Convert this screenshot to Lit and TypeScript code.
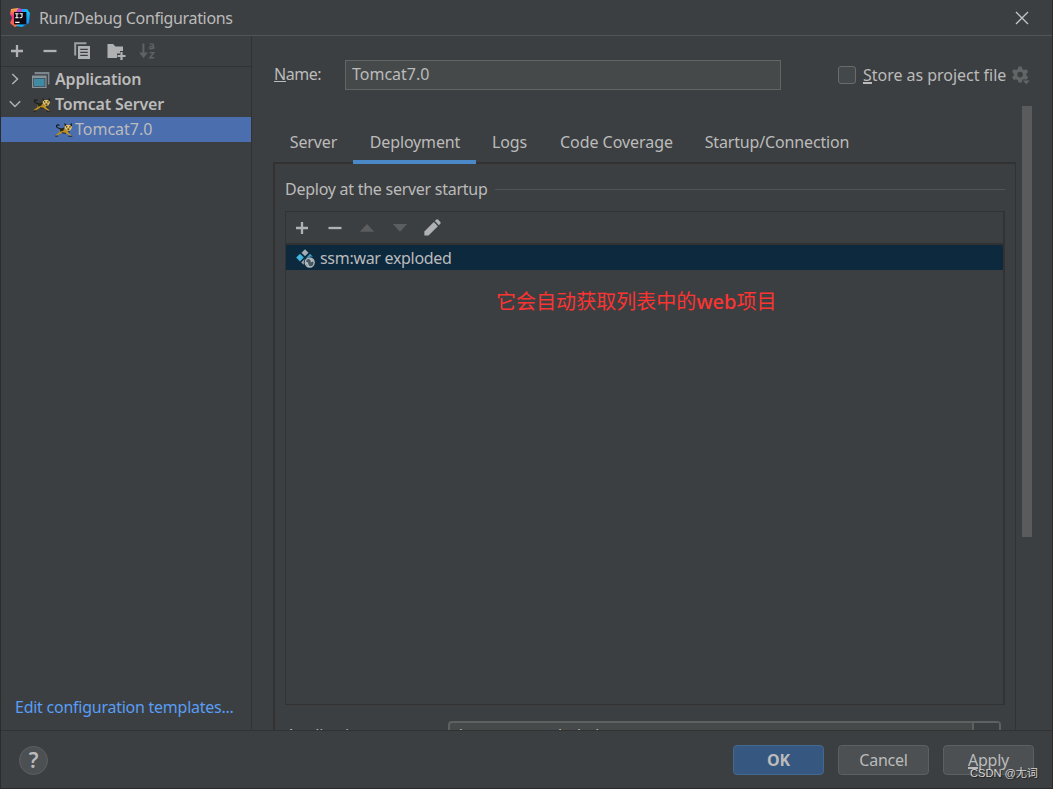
import { LitElement, html, css, svg } from "lit";
import { customElement, property, state } from "lit/decorators.js";
import { classMap } from "lit/directives/class-map.js";

const icons: Record<string, { w: number; h: number; body: unknown }> = {
  logo: {
    w: 20, h: 20,
    body: svg`
      <defs>
        <linearGradient id="lg1" x1="0" y1="0" x2="0" y2="1"><stop offset="0" stop-color="#fdb43c"/><stop offset=".45" stop-color="#f0307c"/><stop offset="1" stop-color="#fc7b3d"/></linearGradient>
        <linearGradient id="lg2" x1="0" y1="0" x2="1" y2="1"><stop offset="0" stop-color="#2b7bfd"/><stop offset=".5" stop-color="#13c3f5"/><stop offset="1" stop-color="#1a6df5"/></linearGradient>
      </defs>
      <path d="M1 1 L8 0 L12 4 L9 17 L5 19 L0 15 L2 10 L0 6Z" fill="url(#lg1)"/>
      <path d="M11 1 L17 1 L20 5 L19 15 L12 19 L6 18 L9 15Z" fill="url(#lg2)"/>
      <path d="M8 0 L12 1 L12 5 L6 5Z" fill="#b34bd0"/>
      <rect x="4" y="4" width="12.4" height="12.4" fill="#100b12"/>
      <path d="M5.2 5.7h3.4M6.9 5.7v4M5.2 9.8h3.4M9.6 5.7h3.2M12 5.7v3q0 1.2-2.4 1.1M5.2 14.4h4.4" stroke="#fff" stroke-width="1.1" fill="none"/>`,
  },
  close: { w: 14, h: 14, body: svg`<path d="M1 1L13 13M13 1L1 13" stroke="#c4c6c7" stroke-width="1.3" fill="none"/>` },
  add: { w: 14, h: 14, body: svg`<path d="M7 1v12M1 7h12" stroke="#afb1b3" stroke-width="2.3"/>` },
  remove: { w: 14, h: 14, body: svg`<path d="M0.5 7h13" stroke="#afb1b3" stroke-width="2.3"/>` },
  copy: {
    w: 17, h: 18,
    body: svg`<path d="M1.2 13.5V1.2H12.4" stroke="#9da0a2" stroke-width="2" fill="none"/>
      <path d="M4 4H16V17H4Z" fill="#afb1b3"/><path d="M6.2 7.4h7.6M6.2 10.4h7.6M6.2 13.4h7.6" stroke="#3c3f41" stroke-width="1.2"/>`,
  },
  folder: {
    w: 20, h: 17,
    body: svg`<path d="M.5 1h5.6l2.3 2.4H16V8h-3v2.6h-3V15H.5Z" fill="#afb1b3"/>
      <path d="M14.5 9v8M10.5 13h8" stroke="#afb1b3" stroke-width="2.2"/>`,
  },
  sort: {
    w: 17, h: 18,
    body: svg`<path d="M4.4 1.5V12" stroke="#5f6163" stroke-width="2"/><path d="M0 10.4h9L4.5 16Z" fill="#5f6163"/>
      <path d="M10.7 2.4q2-1 3.4 0 .6.5.6 4.6M14.5 4.3q-4.2 0-3.8 1.6.6 1.5 3.8.1M10.8 10.8h4l-4 5h4.4" stroke="#5f6163" stroke-width="1.4" fill="none"/>`,
  },
  right: { w: 10, h: 12, body: svg`<path d="M2.3 1L7.5 6L2.3 11" stroke="#afb1b3" stroke-width="1.5" fill="none"/>` },
  down: { w: 12, h: 10, body: svg`<path d="M.8 2.3L6 7.5L11.2 2.3" stroke="#afb1b3" stroke-width="1.5" fill="none"/>` },
  app: {
    w: 18, h: 16,
    body: svg`<path d="M2.6 0H17.4V12.5H15.9V2.2H2.6Z" fill="#87939a" opacity=".85"/>
      <path d="M0 3.5H14.6V16H0Z" fill="#87939a"/><path d="M1.3 6H13.3V14.8H1.3Z" fill="#3c3f41"/><path d="M2 6.6H12.6V14.2H2Z" fill="#3e8ba3"/>`,
  },
  tomcat: {
    w: 18, h: 14,
    body: svg`<path d="M5.6 5.8Q.6 4.6 1.6 2.6Q2.6 1.2 4.6 2.2" stroke="#17191a" stroke-width="1.2" fill="none"/>
      <path d="M5 6.6L10 6L14.6 8.3L12 10L7.6 9.4L3.4 12L.6 12.6L.5 12L4.2 9.4Z" fill="#b98d20"/>
      <path d="M9.2 9L13 9.4L16.7 12.4L16 13L11.9 10.8Z" fill="#c99b22"/>
      <path d="M4.8 5.4L9.2 4.6L8.6 7.6L5.2 8.8Z" fill="#292718"/>
      <path d="M9.8 1.2L12 2.1H14.4L16.5 1.2L16.9 4.8L15.3 7.4H12L9.8 5.3Z" fill="#e6c568"/>
      <path d="M9.2 0L11.8 1.8L9.8 3.4ZM17.1 0L14.6 1.8L16.9 3.4Z" fill="#1d1d1d"/>
      <path d="M11 3.9h1.3M14.3 3.9h1.3M12.4 6.1h1.9" stroke="#27241b" stroke-width="1.2"/>
      <path d="M.2 13.2h3M13.2 13.3h4M7 9.8l4 .6M13 8.6l2 .4" stroke="#222" stroke-width=".9"/>`,
  },
  gear: {
    w: 19, h: 19,
    body: svg`<path d="M6.4 .6H9.8L10.3 3L12.1 4L14.5 3.2L16.1 6.1L14.3 7.8V9.4L16.1 11.1L14.5 14L12.1 13.2L10.3 14.2L9.8 16.6H6.4L5.9 14.2L4.1 13.2L1.7 14L.1 11.1L1.9 9.4V7.8L.1 6.1L1.7 3.2L4.1 4L5.9 3ZM8.1 5.8A2.8 2.8 0 1 0 8.1 11.4A2.8 2.8 0 1 0 8.1 5.8Z" fill="#626466" fill-rule="evenodd"/>
      <path d="M9.9 13.8H18.6L14.3 18.8Z" fill="#3c3f41"/><path d="M10.8 14.4H17.8L14.3 18.2Z" fill="#626466"/>`,
  },
  up: { w: 16, h: 10, body: svg`<path d="M.8 8.8L8 1L15.2 8.8Z" fill="#5b5d5e"/>` },
  drop: { w: 16, h: 10, body: svg`<path d="M.8 1L8 8.8L15.2 1Z" fill="#5b5d5e"/>` },
  edit: {
    w: 18, h: 18,
    body: svg`<path d="M.4 16.6V12.5L9.8 3.1L13.9 7.2L4.5 16.6Z" fill="#afb1b3"/><path d="M10.8 2.1L12.4.6Q13.2 0 14 .6L16.4 3Q17 3.8 16.4 4.6L14.9 6.2Z" fill="#afb1b3"/>`,
  },
  artifact: {
    w: 19, h: 19,
    body: svg`<path d="M9 .2L12.5 3.7L9 7.2L5.5 3.7Z" fill="#a2adb4"/><path d="M4 4.8L7.8 8.6L4 12.4L.2 8.6Z" fill="#42b5dc"/>
      <path d="M14 4.8L17 7.8Q13.5 6.6 11.3 9L10.4 8.4Z" fill="#3b9ebf"/><path d="M8.9 9.8Q7.2 12 7.7 15.8L5.2 13.4Z" fill="#a2adb4"/>
      <circle cx="13.7" cy="13.5" r="4.5" fill="#48555e" stroke="#b1bbc1" stroke-width="1.3"/>
      <path d="M9.5 12.2L12 13.4L12.5 15.5L14 17.8Q10 17.4 9.5 12.2ZM12.5 9.5Q17.5 9.2 17.9 13L16.2 12.4L14.8 13.5L14.6 11.6Z" fill="#b1bbc1"/>`,
  },
};

@customElement("ui-icon")
class UiIcon extends LitElement {
  @property() name = "add";
  static styles = css`
    :host { display: block; flex: none; }
    svg { display: block; }
  `;
  render() {
    const i = icons[this.name];
    return html`<svg width=${i.w} height=${i.h} viewBox="0 0 ${i.w} ${i.h}">${i.body}</svg>`;
  }
}

const tabs = [
  { id: "server", label: "Server" },
  { id: "deployment", label: "Deployment" },
  { id: "logs", label: "Logs" },
  { id: "coverage", label: "Code Coverage" },
  { id: "startup", label: "Startup/Connection" },
];

@customElement("app-root")
class AppRoot extends LitElement {
  @state() private tab = "deployment";

  static styles = css`
    :host {
      display: block; width: 1053px; height: 789px; overflow: hidden; position: relative;
      font: 16px/24px "Noto Sans", "Noto Sans CJK SC", sans-serif; color: #bbbbbb; background: #3c3f41;
    }
    * { box-sizing: border-box; }
    .dialog {
      display: flex; flex-direction: column; width: 100%; height: 100%;
      border: solid #2b2b2d; border-width: 0 1px 1px 1px;
    }
    .title { display: flex; align-items: center; height: 36px; flex: none; padding: 0 23px 0 9px; border-bottom: 1px solid #525557; }
    .title span { flex: 1; margin-left: 9px; white-space: nowrap; letter-spacing: -0.33px; }
    .main { display: flex; flex: 1; min-height: 0; }
    .side { display: flex; flex-direction: column; width: 251px; flex: none; border-right: 1px solid #323232; }
    .side-tools { display: flex; align-items: center; height: 31px; flex: none; padding-left: 9px; border-bottom: 1px solid #323232; }
    .side-tools .g1 { margin-left: 19px; }
    .side-tools .g2 { margin-left: 17px; }
    .side-tools .g3 { margin-left: 16px; }
    .side-tools .g4 { margin-left: 12px; }
    .row { display: flex; align-items: center; height: 25px; flex: none; white-space: nowrap; }
    .row > span { padding-bottom: 2px; }
    .row.bold { font-weight: 600; letter-spacing: -0.19px; }
    .row.top { padding-left: 8px; }
    .arrow { width: 12px; margin-right: 11px; padding-bottom: 2px; flex: none; display: flex; justify-content: center; }
    .ic { width: 23px; flex: none; display: flex; }
    .ic.cat { padding-left: 1px; }
    .row.sel { background: #4b6eaf; padding-left: 54px; }
    .row.sel .ic { width: 20px; }
    .grow { flex: 1; }
    .edit { color: #589df6; padding: 0 0 11px 14px; white-space: nowrap; letter-spacing: -0.25px; }
    .content { display: flex; flex: 1; min-width: 0; overflow: hidden; }
    .form { display: flex; flex-direction: column; width: 761px; margin-left: 21px; flex: none; }
    .name { display: flex; align-items: center; height: 30px; margin-top: 24px; flex: none; white-space: nowrap; }
    .name label { width: 72px; padding: 0 0 2px 1px; letter-spacing: -0.45px; }
    u { text-decoration: none; border-bottom: 1px solid #bbbbbb; display: inline-block; line-height: 18px; height: 17px; }
    .check-label u, .btn u { border-bottom-width: 2px; height: 18px; }
    .input { width: 436px; height: 30px; border: 1px solid #646464; background: #45494a; padding-left: 6px; line-height: 27px; }
    .check { width: 18px; height: 18px; border: 1.5px solid #6b6b6b; border-radius: 3px; background: #43494a; margin: 0 7px 0 57px; }
    .check-label { margin-right: 5px; width: 144px; letter-spacing: -0.03px; }
    .tabs { display: flex; height: 44px; margin-top: 30px; flex: none; position: relative; z-index: 1; letter-spacing: -0.15px; }
    .tab { height: 44px; padding: 10px 0 0; display: flex; justify-content: center; white-space: nowrap; }
    .tab.active { border-bottom: 4px solid #4a88c7; }
    .tab.server { width: 80px; padding-left: 1px; }
    .tab.deployment { width: 123px; padding-left: 1px; }
    .tab.logs { width: 67px; }
    .tab.coverage { width: 146px; padding-left: 1px; letter-spacing: -0.05px; }
    .tab.startup { width: 175px; padding-left: 1px; }
    .panel { width: 743px; height: 600px; margin-top: -2px; border: 2px solid #323232; border-right-width: 1px; padding: 13px 10px 0 10px; flex: none; }
    .group { display: flex; align-items: center; height: 24px; white-space: nowrap; letter-spacing: -0.26px; }
    .group i { flex: 1; height: 1px; background: #515456; margin-left: 7px; }
    .list { height: 494px; margin-top: 10px; border: 1px solid #323232; border-right-width: 2px; width: 720px; }
    .list-tools { display: flex; align-items: center; height: 33px; border-bottom: 2px solid #323232; padding-left: 9px; }
    .list-tools .a { margin-left: 19px; }
    .list-tools .b { margin-left: 17px; }
    .list-tools .c { margin-left: 16px; }
    .item { display: flex; align-items: center; height: 25px; background: #0d293e; padding-left: 10px; white-space: nowrap; letter-spacing: -0.3px; }
    .item ui-icon { margin: 2px 5px 0 0; }
    .note { color: #fb3432; font-size: 20px; line-height: 30px; margin: 17px 0 0 210px; white-space: nowrap; letter-spacing: 0.04px;
      font-family: "Noto Sans", "Noto Sans CJK SC", sans-serif; }
    .note b { font-weight: 500; }
    .ctx { display: flex; margin-top: 16px; height: 32px; white-space: nowrap; }
    .ctx .lab { width: 163px; padding: 2px 0 0 1px; letter-spacing: -0.2px; }
    .combo { display: flex; width: 553px; height: 32px; flex: none; border: 2px solid #5e6162; border-radius: 4px; background: #45494a; }
    .combo span { flex: 1; padding-left: 6px; letter-spacing: -0.3px; }
    .combo b { width: 27px; border-left: 2px solid #5e6162; background: #3c3f41; }
    .scroll { width: 10px; height: 431px; margin: 70px 0 0 -12px; background: #5a5b5c; flex: none; }
    .foot { display: flex; align-items: center; height: 58px; flex: none; border-top: 1px solid #323232; padding: 1px 18px 0 18px; gap: 14px; }
    .help { width: 29px; height: 29px; border-radius: 50%; border: 1px solid #5e6060; background: #4c5052; font: 600 21px/27px "Noto Sans", sans-serif; text-align: center; margin-right: auto; }
    .btn { width: 91px; height: 30px; border-radius: 4px; border: 1.5px solid #5e6060; background: #4c5052; display: flex; justify-content: center; align-items: center; letter-spacing: -0.25px; }
    .btn.ok { background: #365880; border-color: #43698f; font-weight: 700; }
    .mark { position: absolute; left: 970px; top: 765px; font: 11.1px/17px "Liberation Sans", "Noto Sans CJK SC", sans-serif; color: #d4d4d4; text-shadow: 1px 1px 1px #222; white-space: nowrap; }
  `;

  private tabView(t: { id: string; label: string }) {
    return html`<div class=${classMap({ tab: true, [t.id]: true, active: t.id === this.tab })}
      @click=${() => (this.tab = t.id)}><span>${t.label}</span></div>`;
  }

  render() {
    return html`
      <div class="dialog">
        <div class="title"><ui-icon name="logo"></ui-icon><span>Run/Debug Configurations</span><ui-icon name="close"></ui-icon></div>
        <div class="main">
          <div class="side">
            <div class="side-tools">
              <ui-icon name="add"></ui-icon><ui-icon class="g1" name="remove"></ui-icon><ui-icon class="g2" name="copy"></ui-icon><ui-icon class="g3" name="folder"></ui-icon><ui-icon class="g4" name="sort"></ui-icon>
            </div>
            <div class="row bold top"><div class="arrow"><ui-icon name="right"></ui-icon></div><div class="ic"><ui-icon name="app"></ui-icon></div><span>Application</span></div>
            <div class="row bold top"><div class="arrow"><ui-icon name="down"></ui-icon></div><div class="ic cat"><ui-icon name="tomcat"></ui-icon></div><span>Tomcat Server</span></div>
            <div class="row sel"><div class="ic"><ui-icon name="tomcat"></ui-icon></div><span>Tomcat7.0</span></div>
            <div class="grow"></div>
            <div class="edit"><span>Edit configuration templates...</span></div>
          </div>
          <div class="content">
            <div class="form">
              <div class="name">
                <label><u>N</u>ame:</label>
                <div class="input"><span>Tomcat7.0</span></div>
                <div class="check"></div><span class="check-label"><u>S</u>tore as project file</span><ui-icon name="gear"></ui-icon>
              </div>
              <div class="tabs">${tabs.map((t) => this.tabView(t))}</div>
              <div class="panel">
                <div class="group"><span>Deploy at the server startup</span><i></i></div>
                <div class="list">
                  <div class="list-tools">
                    <ui-icon name="add"></ui-icon><ui-icon class="a" name="remove"></ui-icon><ui-icon class="b" name="up"></ui-icon><ui-icon class="b" name="drop"></ui-icon><ui-icon class="c" name="edit"></ui-icon>
                  </div>
                  <div class="item"><ui-icon name="artifact"></ui-icon><span>ssm:war exploded</span></div>
                  <div class="note">它会自动获取列表中的<b>web</b>项目</div>
                </div>
                <div class="ctx"><div class="lab">Application context:</div><div class="combo"><span>/ssm_war_exploded</span><b></b></div></div>
              </div>
            </div>
            <div class="scroll"></div>
          </div>
        </div>
        <div class="foot"><div class="help">?</div><div class="btn ok">OK</div><div class="btn">Cancel</div><div class="btn"><span><u>A</u>pply</span></div></div>
      </div>
      <div class="mark">CSDN @尢词</div>
    `;
  }
}
